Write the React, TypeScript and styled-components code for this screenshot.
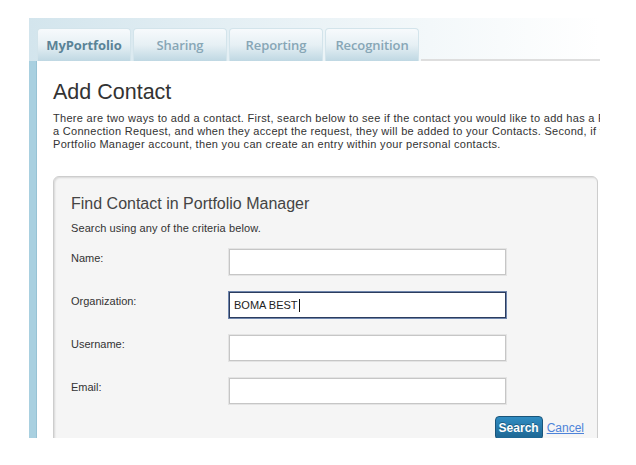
import React from 'react';
import styled, { createGlobalStyle } from 'styled-components';

const GlobalStyle = createGlobalStyle`
  body {
    margin: 0;
    background: #fff;
    font-family: 'Liberation Sans', Arial, sans-serif;
    color: #333;
  }
`;

const Page = styled.div`
  padding: 18px 0 0 29px;
`;

const Frame = styled.div`
  width: 571px;
  height: 420px;
  overflow: hidden;
  display: flex;
  flex-direction: column;
`;

const TabBar = styled.div`
  display: flex;
  align-items: flex-end;
  gap: 2px;
  height: 43px;
  padding-left: 8px;
  background: linear-gradient(to right, #d3e5ed 0%, #e4eff4 35%, #f3f8fa 70%, #fff 100%);
`;

const Tab = styled.div<{ $active?: boolean }>`
  width: 94px;
  height: 33px;
  box-sizing: border-box;
  display: flex;
  align-items: center;
  justify-content: center;
  border: 1px solid #d3e4eb;
  border-bottom: none;
  border-radius: 4px 4px 0 0;
  background: linear-gradient(#f7fafc 0%, #e6f0f4 50%, #bfd8e3 100%);
  font-family: 'Open Sans', sans-serif;
  font-size: 13px;
  font-weight: ${p => (p.$active ? 700 : 600)};
  color: ${p => (p.$active ? '#5a8397' : '#87a6b6')};
  letter-spacing: -0.1px;
`;

const TabFiller = styled.div`
  flex: 1;
  align-self: stretch;
  border-bottom: 2px solid #dedede;
`;

const Body = styled.div`
  flex: 1;
  display: flex;
  min-height: 0;
`;

const Strip = styled.div`
  width: 7px;
  flex: none;
  background: #a9d0e0;
  border-right: 1px solid #97c2d4;
`;

const Panel = styled.div`
  flex: 1;
  background: #fff;
  padding: 19px 0 0 16px;
  min-width: 0;
`;

const Title = styled.h1`
  margin: 0;
  font-size: 21.5px;
  line-height: 24px;
  font-weight: normal;
  color: #333;
`;

const Intro = styled.p`
  margin: 8px 0 0;
  font-size: 11px;
  line-height: 13px;
  letter-spacing: 0.3px;
  color: #333;
`;

const IntroLine = styled.span`
  display: block;
  white-space: nowrap;
`;

const SearchBox = styled.div`
  width: 545px;
  box-sizing: border-box;
  margin-top: 25px;
  padding: 17px 13px 20px 17px;
  border: 1px solid #cdcdcd;
  border-radius: 6px;
  background: #f5f5f5;
  box-shadow: inset 1px 1px 2px rgba(0, 0, 0, 0.12);
`;

const BoxTitle = styled.h2`
  margin: 0;
  font-size: 16px;
  line-height: 20px;
  font-weight: normal;
  color: #444;
`;

const Hint = styled.div`
  margin-top: 8px;
  font-size: 11px;
  line-height: 13px;
  letter-spacing: 0.1px;
  color: #333;
`;

const Fields = styled.div`
  margin-top: 14px;
  display: grid;
  grid-template-columns: 158px 277px;
  row-gap: 17px;
`;

const Label = styled.label`
  font-size: 11px;
  line-height: 13px;
  padding-top: 3px;
  color: #333;
`;

const Input = styled.input`
  width: 277px;
  height: 26px;
  box-sizing: border-box;
  margin: 0;
  padding: 0 5px;
  border: 1px solid #c6c6c6;
  box-shadow: 0 0 0 1px #e4e4e4;
  background: #fff;
  font-family: 'Liberation Sans', Arial, sans-serif;
  font-size: 11px;
  color: #222;
  outline: none;
`;

const FocusedField = styled.div`
  width: 277px;
  height: 26px;
  box-sizing: border-box;
  display: flex;
  align-items: center;
  padding: 0 4px;
  border: 1px solid #2c3c5e;
  box-shadow: 0 0 0 1px #6f86ad;
  background: #fff;
  font-size: 11px;
  color: #222;
`;

const Caret = styled.span`
  display: inline-block;
  width: 1px;
  height: 13px;
  margin-left: 1px;
  background: #111;
`;

const Actions = styled.div`
  display: flex;
  justify-content: flex-end;
  align-items: center;
  gap: 4px;
  margin-top: 12px;
`;

const SearchButton = styled.button`
  height: 24px;
  padding: 0 3px;
  border: 1px solid #1a5479;
  border-radius: 4px;
  background: linear-gradient(#2f8cc2, #1d6591);
  color: #fff;
  font-family: 'Liberation Sans', Arial, sans-serif;
  font-size: 12px;
  font-weight: bold;
  text-shadow: 0 -1px 0 rgba(0, 0, 0, 0.3);
  cursor: pointer;
`;

const CancelLink = styled.a`
  font-size: 12px;
  color: #4d83d9;
  text-decoration: underline;
  cursor: pointer;
`;

const tabs = ['MyPortfolio', 'Sharing', 'Reporting', 'Recognition'];

export default function App() {
  return (
    <>
      <GlobalStyle />
      <Page>
        <Frame>
          <TabBar>
            {tabs.map((t, i) => (
              <Tab key={t} $active={i === 0}>
                {t}
              </Tab>
            ))}
            <TabFiller />
          </TabBar>
          <Body>
            <Strip />
            <Panel>
              <Title>Add Contact</Title>
              <Intro>
                <IntroLine>
                  There are two ways to add a contact. First, search below to see if the contact you would like to add has a Portfolio Manager account. If they do, you can send them
                </IntroLine>
                <IntroLine>
                  a Connection Request, and when they accept the request, they will be added to your Contacts. Second, if the person does not have a
                </IntroLine>
                <IntroLine>
                  Portfolio Manager account, then you can create an entry within your personal contacts.
                </IntroLine>
              </Intro>
              <SearchBox>
                <BoxTitle>Find Contact in Portfolio Manager</BoxTitle>
                <Hint>Search using any of the criteria below.</Hint>
                <Fields>
                  <Label>Name:</Label>
                  <Input />
                  <Label>Organization:</Label>
                  <FocusedField>
                    BOMA BEST
                    <Caret />
                  </FocusedField>
                  <Label>Username:</Label>
                  <Input />
                  <Label>Email:</Label>
                  <Input />
                </Fields>
                <Actions>
                  <SearchButton>Search</SearchButton>
                  <CancelLink>Cancel</CancelLink>
                </Actions>
              </SearchBox>
            </Panel>
          </Body>
        </Frame>
      </Page>
    </>
  );
}
